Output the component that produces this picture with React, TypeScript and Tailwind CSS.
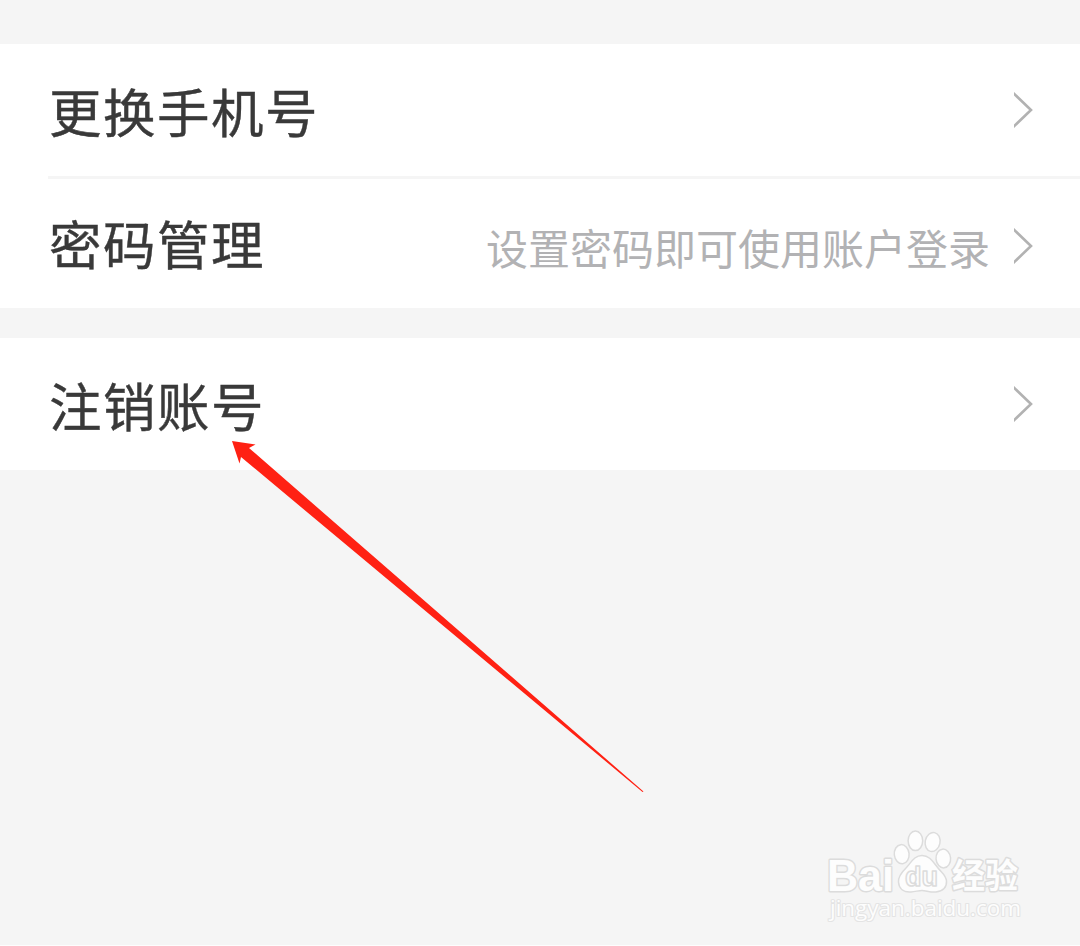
type RowProps = {
  title: string;
  hint?: string;
  className: string;
};

function Chevron() {
  return (
    <svg className="w-[19px] h-9 shrink-0 overflow-hidden" viewBox="0 0 19 36" fill="none">
      <path d="M-1 0.8L17 18L-1 35.2" stroke="#b2b2b2" strokeWidth="2.6" />
    </svg>
  );
}

function Row({ title, hint, className }: RowProps) {
  return (
    <div className={`flex items-center justify-between pr-[47px] ${className}`}>
      <span className="pl-px text-[52.5px] leading-[54px] tracking-[1.5px] text-[#393939] whitespace-nowrap [-webkit-text-stroke:0.4px_#393939]">
        {title}
      </span>
      <div className="flex items-center">
        {hint && <span className="mr-[24px] pt-px text-[42px] leading-[42px] text-[#b2b2b4] whitespace-nowrap">{hint}</span>}
        <Chevron />
      </div>
    </div>
  );
}

function Arrow() {
  return (
    <svg className="absolute left-0 top-0 w-[1080px] h-[946px] pointer-events-none" viewBox="0 0 1080 946">
      <path d="M232 441L255.5 444.5L249 448L643.5 791.5L642.5 792L241 457L239.5 463.5Z" fill="#ff2113" />
    </svg>
  );
}

function Watermark() {
  return (
    <svg
      className="absolute left-[820px] top-[824px] w-[220px] h-[104px]"
      viewBox="820 824 220 104"
      fill="#fdfdfd"
      stroke="#dcdcdc"
      strokeWidth="1.5"
      strokeLinejoin="round"
    >
      <g fontWeight="700" paintOrder="stroke" strokeWidth="3">
        <text x="827" y="891" fontSize="45" fontFamily="'Liberation Sans', sans-serif" textLength="67" lengthAdjust="spacingAndGlyphs">Bai</text>
        <text x="952" y="888" fontSize="34" fontFamily="'Noto Sans CJK SC', sans-serif" textLength="66" lengthAdjust="spacingAndGlyphs">经验</text>
      </g>
      {/* Paw */}
      <ellipse cx="901.7" cy="854.2" rx="7.4" ry="9.6" transform="rotate(-6 901.7 854.2)" />
      <ellipse cx="915.4" cy="840.8" rx="7.3" ry="9.8" />
      <ellipse cx="932.6" cy="842" rx="7.4" ry="9.6" transform="rotate(12 932.6 842)" />
      <ellipse cx="943.3" cy="858.5" rx="7.3" ry="9.4" transform="rotate(-5 943.3 858.5)" />
      <path d="M922 855.5C914 855.5 911 863 906 868C901 873 898 877 898.500 882C899 889 904 892.500 911 892C916 891.500 919 890.500 922 890.500C926 890.500 930 892.500 936 892C943 891.500 947 887 946.500 881C946 875 942 873 938 868C933 862 930 855.500 922 855.500Z" />
      <text x="905" y="886" fontSize="27" fontFamily="'Liberation Sans', sans-serif" fontWeight="700" textLength="33" lengthAdjust="spacingAndGlyphs">du</text>
      <text
        x="830"
        y="916"
        fontSize="22"
        fontFamily="'Open Sans', 'Noto Sans', sans-serif"
        fontWeight="400"
        paintOrder="stroke"
        stroke="#e4e4e4"
        strokeWidth="2.2"
        textLength="191"
        lengthAdjust="spacingAndGlyphs"
      >
        jingyan.baidu.com
      </text>
    </svg>
  );
}

export default function App() {
  return (
    <div className="relative w-[1080px] h-[946px] overflow-hidden bg-[#f5f5f5] border-b border-[#fdfdfd] pt-11 font-['Noto_Sans_CJK_SC',sans-serif]">
      <div className="bg-white pl-12">
        <Row title="更换手机号" className="h-[132px]" />
        <div className="h-[3px] bg-[#f5f5f5]" />
        <Row title="密码管理" hint="设置密码即可使用账户登录" className="h-[129px] pt-[5px] [&>span]:-mt-2" />
      </div>
      <div className="mt-[30px] bg-white pl-12">
        <Row title="注销账号" className="h-[132px]" />
      </div>
      <Arrow />
      <Watermark />
    </div>
  );
}
